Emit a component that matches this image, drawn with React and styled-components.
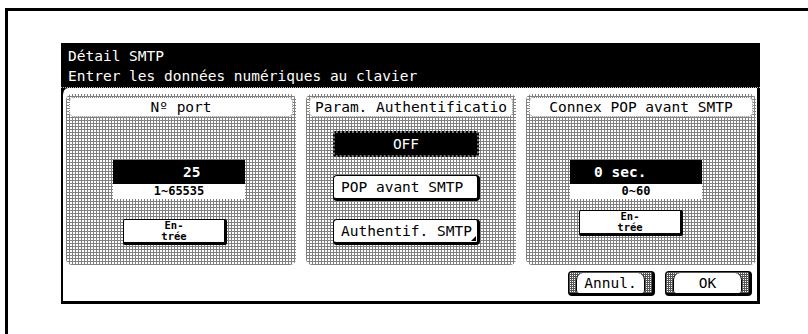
import React from "react";
import styled, { createGlobalStyle } from "styled-components";

const GlobalStyle = createGlobalStyle`
  html, body {
    margin: 0;
    padding: 0;
    background: #fff;
  }
  body {
    font-family: "DejaVu Sans Mono", "Liberation Mono", monospace;
    color: #000;
  }
`;

const mesh = `
  background-color: #fff;
  background-image:
    repeating-linear-gradient(0deg, #808080 0 1px, transparent 1px 3px),
    repeating-linear-gradient(90deg, #808080 0 1px, transparent 1px 3px);
`;

const Frame = styled.div`
  margin: 8px 0 0 5px;
  height: calc(100vh - 8px);
  box-sizing: border-box;
  border-top: 3px solid #000;
  border-left: 3px solid #000;
  padding: 32px 0 0 53px;
`;

const Dialog = styled.div`
  width: 699px;
  height: 261px;
  display: flex;
  flex-direction: column;
  background: #000;
`;

const Header = styled.div`
  height: 45px;
  box-sizing: border-box;
  padding: 3px 0 0 7px;
  color: #fff;
  font-size: 14.5px;
  line-height: 20px;
  border-bottom: 1px dotted #bbb;
  white-space: nowrap;
`;

const Body = styled.div`
  flex: 1;
  background: #fff;
  border-left: 2px solid #000;
  border-right: 3px solid #000;
  border-bottom: 3px solid #000;
  border-top-left-radius: 7px;
  border-top-right-radius: 3px;
  padding: 6px 0 0 3px;
  display: flex;
  flex-direction: column;
`;

const PanelRow = styled.div`
  display: flex;
  gap: 10px;
`;

const Panel = styled.section`
  width: ${(p) => p.$w}px;
  height: 171px;
  box-sizing: border-box;
  border-radius: 6px;
  padding: 3px;
  ${mesh}
  display: flex;
  flex-direction: column;
  align-items: flex-start;
`;

const Label = styled.div`
  align-self: stretch;
  height: 18px;
  background: #fff;
  border: 1px dotted #888;
  border-radius: 5px;
  font-size: 14.5px;
  line-height: 18px;
  text-align: center;
  white-space: nowrap;
  overflow: hidden;
`;

const Stack = styled.div`
  display: flex;
  flex-direction: column;
  align-items: flex-start;
  gap: ${(p) => p.$gap}px;
  margin-top: ${(p) => p.$top}px;
  margin-left: ${(p) => p.$left}px;
`;

const ValueBox = styled.div`
  width: 132px;
  display: flex;
  flex-direction: column;
`;

const Value = styled.div`
  height: 24px;
  background: #000;
  color: #fff;
  font-weight: bold;
  font-size: 14.5px;
  line-height: 24px;
  padding-left: ${(p) => p.$pad}px;
  white-space: pre;
`;

const Range = styled.div`
  height: 15px;
  background: #fff;
  font-weight: bold;
  font-size: 12px;
  line-height: 15px;
  text-align: center;
`;

const EnterButton = styled.button`
  width: 104px;
  height: 26px;
  box-sizing: border-box;
  margin-left: ${(p) => p.$shift || 0}px;
  background: #fff;
  border: 1px solid #000;
  border-right-width: 3px;
  border-bottom-width: 3px;
  border-radius: 2px;
  padding: 0;
  font-family: inherit;
  font-weight: bold;
  font-size: 10.5px;
  line-height: 11px;
  color: #000;
  text-align: center;
`;

const Toggle = styled.div`
  width: 146px;
  height: 26px;
  box-sizing: border-box;
  background: #000;
  color: #fff;
  border: 2px dotted #777;
  border-radius: 3px;
  font-size: 14.5px;
  line-height: 22px;
  text-align: center;
`;

const OptionButton = styled.button`
  position: relative;
  width: 147px;
  height: 26px;
  box-sizing: border-box;
  background: #fff;
  border: 1px solid #000;
  border-right-width: 3px;
  border-bottom-width: 3px;
  border-radius: 4px;
  padding: 0 0 0 7px;
  font-family: inherit;
  font-size: 14.5px;
  line-height: 22px;
  color: #000;
  text-align: left;
  white-space: nowrap;

  ${(p) =>
    p.$corner &&
    `
    &::after {
      content: "";
      position: absolute;
      right: 1px;
      bottom: 1px;
      border-left: 5px solid transparent;
      border-bottom: 5px solid #000;
    }
  `}
`;

const Footer = styled.div`
  display: flex;
  justify-content: flex-end;
  gap: 10px;
  margin-top: 6px;
  padding-right: 5px;
`;

const DialogButton = styled.button`
  width: 87px;
  height: 25px;
  box-sizing: border-box;
  border: 1px solid #000;
  border-right-width: 3px;
  border-bottom-width: 3px;
  border-radius: 4px;
  padding: 1px 7px 0;
  background-color: #fff;
  background-image:
    repeating-linear-gradient(0deg, #555 0 1px, transparent 1px 2px),
    repeating-linear-gradient(90deg, #555 0 1px, transparent 1px 2px);
  font-family: inherit;
  color: #000;
  display: flex;
`;

const DialogFace = styled.span`
  flex: 1;
  background: #fff;
  border-left: 1px solid #000;
  border-right: 1px solid #000;
  border-radius: 7px 7px 3px 3px;
  font-size: 14.5px;
  line-height: 20px;
  text-align: center;
`;

export default function App() {
  return (
    <>
      <GlobalStyle />
      <Frame>
        <Dialog>
          <Header>
            <div>Détail SMTP</div>
            <div>Entrer les données numériques au clavier</div>
          </Header>
          <Body>
            <PanelRow>
              <Panel $w={230}>
                <Label>Nº port</Label>
                <Stack $top={43} $left={44} $gap={20}>
                  <ValueBox>
                    <Value $pad={70}>25</Value>
                    <Range>1~65535</Range>
                  </ValueBox>
                  <EnterButton $shift={10}>
                    En-
                    <br />
                    trée
                  </EnterButton>
                </Stack>
              </Panel>
              <Panel $w={210}>
                <Label>Param. Authentificatio</Label>
                <Stack $top={14} $left={24} $gap={18}>
                  <Toggle>OFF</Toggle>
                  <OptionButton>POP avant SMTP</OptionButton>
                  <OptionButton $corner>Authentif. SMTP</OptionButton>
                </Stack>
              </Panel>
              <Panel $w={230}>
                <Label>Connex POP avant SMTP</Label>
                <Stack $top={43} $left={41} $gap={11}>
                  <ValueBox>
                    <Value $pad={24}>0 sec.</Value>
                    <Range>0~60</Range>
                  </ValueBox>
                  <EnterButton $shift={9}>
                    En-
                    <br />
                    trée
                  </EnterButton>
                </Stack>
              </Panel>
            </PanelRow>
            <Footer>
              <DialogButton>
                <DialogFace>Annul.</DialogFace>
              </DialogButton>
              <DialogButton>
                <DialogFace>OK</DialogFace>
              </DialogButton>
            </Footer>
          </Body>
        </Dialog>
      </Frame>
    </>
  );
}
